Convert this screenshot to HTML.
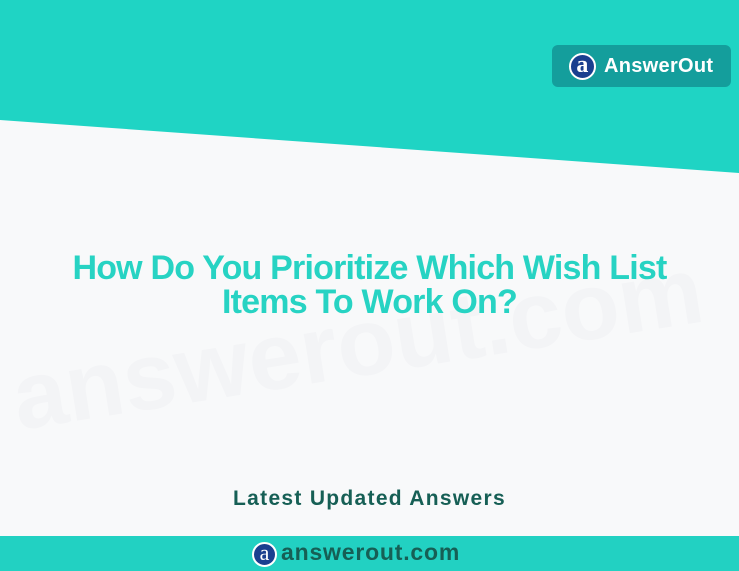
<!DOCTYPE html>
<html><head><style>
body{margin:0;width:739px;height:571px;overflow:hidden;background:#f8f9fa;position:relative;font-family:"Liberation Sans",sans-serif}
.top{position:absolute;left:0;top:0;width:739px;height:180px}
.badge{position:absolute;left:552px;top:45px;width:179px;height:42px;background:#149e9c;border-radius:6px;color:#fff;font-weight:bold;font-size:20px;letter-spacing:0.3px}
.logo{position:absolute;border-radius:50%;background:#1a3f8f;border:2px solid #fff;color:#fff;font-family:"Liberation Serif",serif;text-align:center;box-sizing:border-box}
.title{position:absolute;left:0;width:739px;top:251px;text-align:center;color:#27d3c3;font-weight:bold;font-size:34px;line-height:34px;letter-spacing:-0.8px}
.wm{position:absolute;left:5px;top:345px;font-size:95px;font-weight:bold;color:#f3f4f6;transform:rotate(-9deg);transform-origin:left top;white-space:nowrap}
.latest{position:absolute;left:0;width:739px;top:487px;text-align:center;color:#165f55;font-weight:bold;font-size:21px;letter-spacing:1.3px}
.bot{position:absolute;left:0;top:536px;width:739px;height:35px;background:#22d1c2}
</style></head><body>
<svg class="top" viewBox="0 0 739 180"><polygon points="0,0 739,0 739,173 0,120" fill="#1fd4c4"/></svg>
<div class="wm">answerout.com</div>
<div class="badge"><div class="logo" style="left:17px;top:8px;width:27px;height:27px;font-size:24px;line-height:20px">a</div><span style="position:absolute;left:52px;top:10px">AnswerOut</span></div>
<div class="title">How Do You Prioritize Which Wish List<br>Items To Work On?</div>
<div class="latest">Latest Updated Answers</div>
<div class="bot"><div class="logo" style="left:252px;top:6px;width:25px;height:25px;font-size:22px;line-height:18px">a</div><span style="position:absolute;left:281px;top:3px;font-size:23px;font-weight:bold;color:#165f55;letter-spacing:0.8px">answerout.com</span></div>
</body></html>
